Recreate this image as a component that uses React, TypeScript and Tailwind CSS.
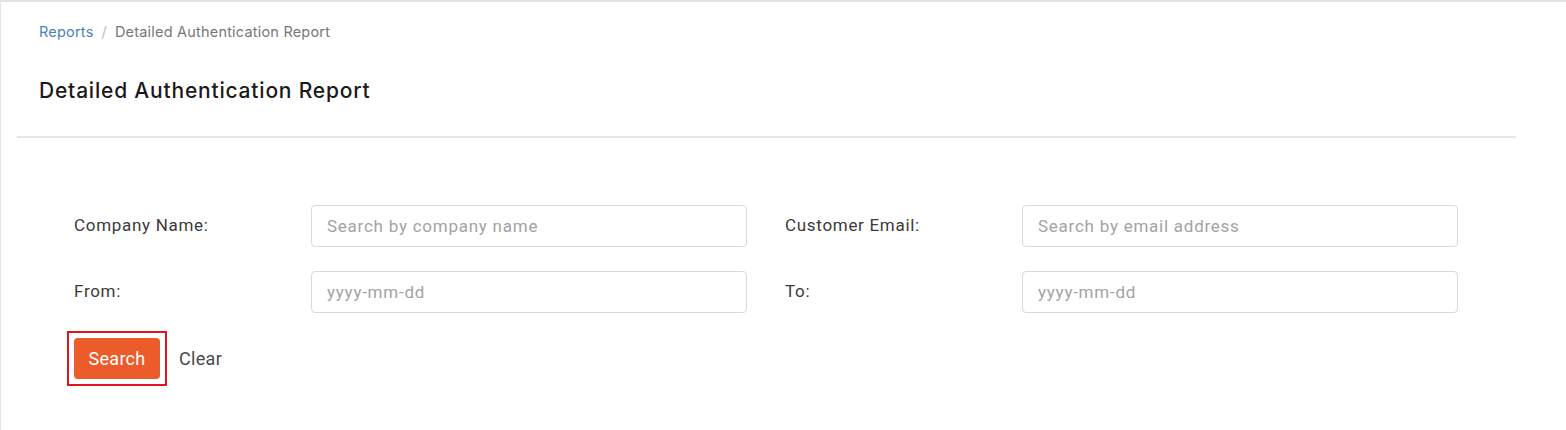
import React, { useState } from 'react';

const Field: React.FC<{ label: string; placeholder: string; value: string; onChange: (v: string) => void }> = ({
  label,
  placeholder,
  value,
  onChange,
}) => (
  <div className="flex items-center">
    <label className="w-[237px] text-[17px] text-[#3a3a3a] tracking-[0.7px]">{label}</label>
    <input
      value={value}
      onChange={(e) => onChange(e.target.value)}
      placeholder={placeholder}
      className="w-[436px] h-[42px] rounded-[4px] border border-[#d9d9d9] px-[15px] text-[17px] tracking-[0.75px] text-[#333] placeholder:text-[#a3a3a3] outline-none"
    />
  </div>
);

const App: React.FC = () => {
  const [company, setCompany] = useState('');
  const [email, setEmail] = useState('');
  const [from, setFrom] = useState('');
  const [to, setTo] = useState('');

  const clear = () => {
    setCompany('');
    setEmail('');
    setFrom('');
    setTo('');
  };

  return (
    <div
      className="w-[1566px] h-[430px] bg-white border-t-2 border-l border-[#e2e2e2] overflow-hidden"
      style={{ fontFamily: 'Inter, "Noto Sans", sans-serif' }}
    >
      <div className="pl-[38px] pt-[19px]">
        <nav className="flex items-center text-[14.5px] tracking-[0.2px] gap-[8px]">
          <a href="#" className="text-[#4f7fb8]">Reports</a>
          <span className="text-[#bdbdbd]">/</span>
          <span className="text-[#777]">Detailed Authentication Report</span>
        </nav>
        <h1 className="mt-[34px] text-[21px] leading-[28px] tracking-[0.8px] font-medium text-[#1a1a1a]">
          Detailed Authentication Report
        </h1>
      </div>

      <div className="ml-[16px] w-[1499px] mt-[31px] h-[2px] bg-[#e6e6e6]" />

      <div className="pl-[73px] pt-[67px]" style={{ fontFamily: 'Roboto, "Noto Sans", sans-serif' }}>
        <div className="flex flex-col gap-[24px]">
          <div className="flex gap-[38px]">
            <Field label="Company Name:" placeholder="Search by company name" value={company} onChange={setCompany} />
            <Field label="Customer Email:" placeholder="Search by email address" value={email} onChange={setEmail} />
          </div>
          <div className="flex gap-[38px]">
            <Field label="From:" placeholder="yyyy-mm-dd" value={from} onChange={setFrom} />
            <Field label="To:" placeholder="yyyy-mm-dd" value={to} onChange={setTo} />
          </div>
        </div>

        <div className="flex items-center mt-[18px] -ml-[7px]">
          <div className="border-2 border-[#e0161e] p-[5px]">
            <button className="w-[86px] h-[41px] rounded-[4px] bg-[#ec5b2a] text-white text-[18px] tracking-[0.3px]">
              Search
            </button>
          </div>
          <button onClick={clear} className="ml-[12px] text-[18px] tracking-[0.3px] text-[#4a4a4a]">
            Clear
          </button>
        </div>
      </div>
    </div>
  );
};

export default App;
